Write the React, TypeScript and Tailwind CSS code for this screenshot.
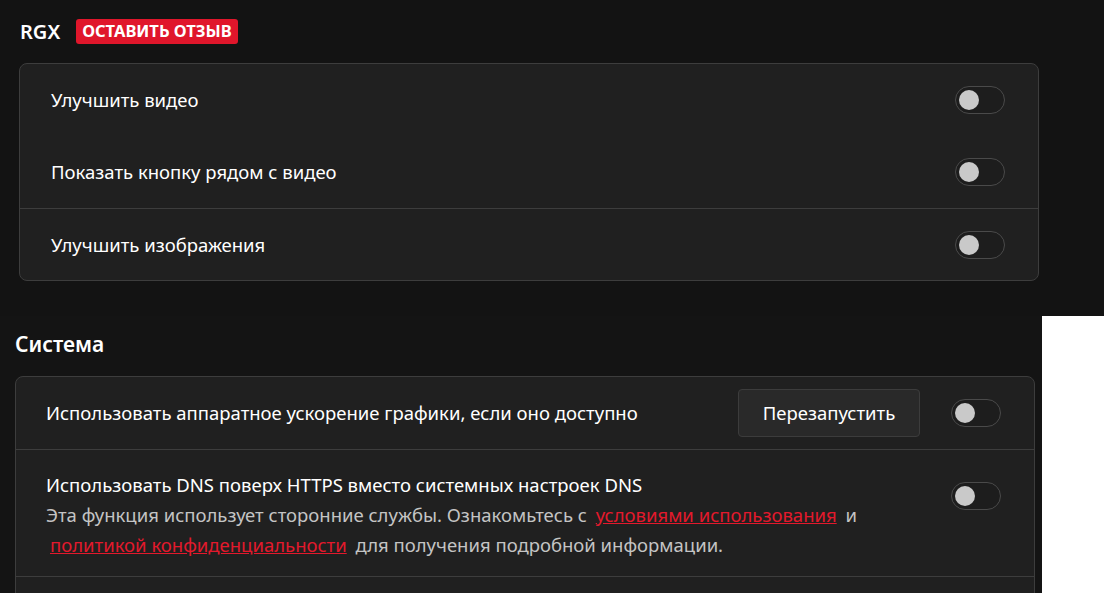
const font = { fontFamily: '"Noto Sans", "Open Sans", sans-serif' };

function Toggle({ className = "" }: { className?: string }) {
  return (
    <div
      className={`flex h-[28px] w-[50px] shrink-0 items-center rounded-full border-[1.5px] border-[#4a4a4a] bg-[#1d1d1d] px-[3px] ${className}`}
    >
      <div className="h-[20px] w-[20px] rounded-full bg-[#c9c9c9]" />
    </div>
  );
}

function Row({ label, divider = false }: { label: string; divider?: boolean }) {
  return (
    <div
      className={`flex h-[72px] items-center justify-between pl-[31px] pr-[33px] ${
        divider ? "border-t border-[#3d3d3d]" : ""
      }`}
    >
      <span className="text-[18.5px] text-white">{label}</span>
      <Toggle />
    </div>
  );
}

export default function App() {
  return (
    <div className="min-h-screen bg-white" style={font}>
      <section className="h-[316px] w-full bg-[#131313] px-[19px] pt-[19px]">
        <div className="flex items-center gap-[16px] pl-[1px]">
          <h2 className="text-[20px] font-semibold leading-[25px] text-white">RGX</h2>
          <span className="flex h-[25px] items-center rounded-[3px] bg-[#e0162b] px-[6px] text-[16.5px] font-bold text-white">
            ОСТАВИТЬ ОТЗЫВ
          </span>
        </div>
        <div className="mt-[19px] w-[1020px] rounded-[8px] border border-[#3d3d3d] bg-[#202020]">
          <Row label="Улучшить видео" />
          <Row label="Показать кнопку рядом с видео" />
          <Row label="Улучшить изображения" divider />
        </div>
      </section>

      <section className="flex">
        <div className="h-[277px] w-[1042px] overflow-hidden bg-[#141414] pl-[15px] pt-[14px]">
          <h2 className="text-[21px] font-semibold leading-[28px] text-white">Система</h2>
          <div className="mt-[18px] h-[300px] w-[1020px] rounded-[8px] border border-[#3d3d3d] bg-[#202020]">
            <div className="flex h-[72px] items-center pl-[30px] pr-[33px]">
              <span className="flex-1 text-[18.5px] text-white">
                Использовать аппаратное ускорение графики, если оно доступно
              </span>
              <button className="flex h-[48px] w-[182px] items-center justify-center rounded-[4px] border border-[#3c3c3c] bg-[#292929] text-[18.5px] text-white">
                Перезапустить
              </button>
              <Toggle className="ml-[31px]" />
            </div>
            <div className="flex h-[127px] items-start border-t border-[#3d3d3d] pl-[30px] pr-[33px] pt-[20px]">
              <div className="flex-1">
                <p className="text-[18.5px] leading-[30px] text-white">
                  Использовать DNS поверх HTTPS вместо системных настроек DNS
                </p>
                <p className="text-[18.5px] leading-[30px] text-[#c4c4c4]">
                  Эта функция использует сторонние службы. Ознакомьтесь с{" "}
                  <a className="mx-[4px] text-[#e3192c] underline">условиями использования</a> и
                  <br />
                  <a className="mx-[4px] text-[#e3192c] underline">политикой конфиденциальности</a>{" "}
                  для получения подробной информации.
                </p>
              </div>
              <Toggle className="mt-[12px]" />
            </div>
            <div className="border-t border-[#3d3d3d]" />
          </div>
        </div>
        <div className="flex-1 bg-white" />
      </section>
    </div>
  );
}
